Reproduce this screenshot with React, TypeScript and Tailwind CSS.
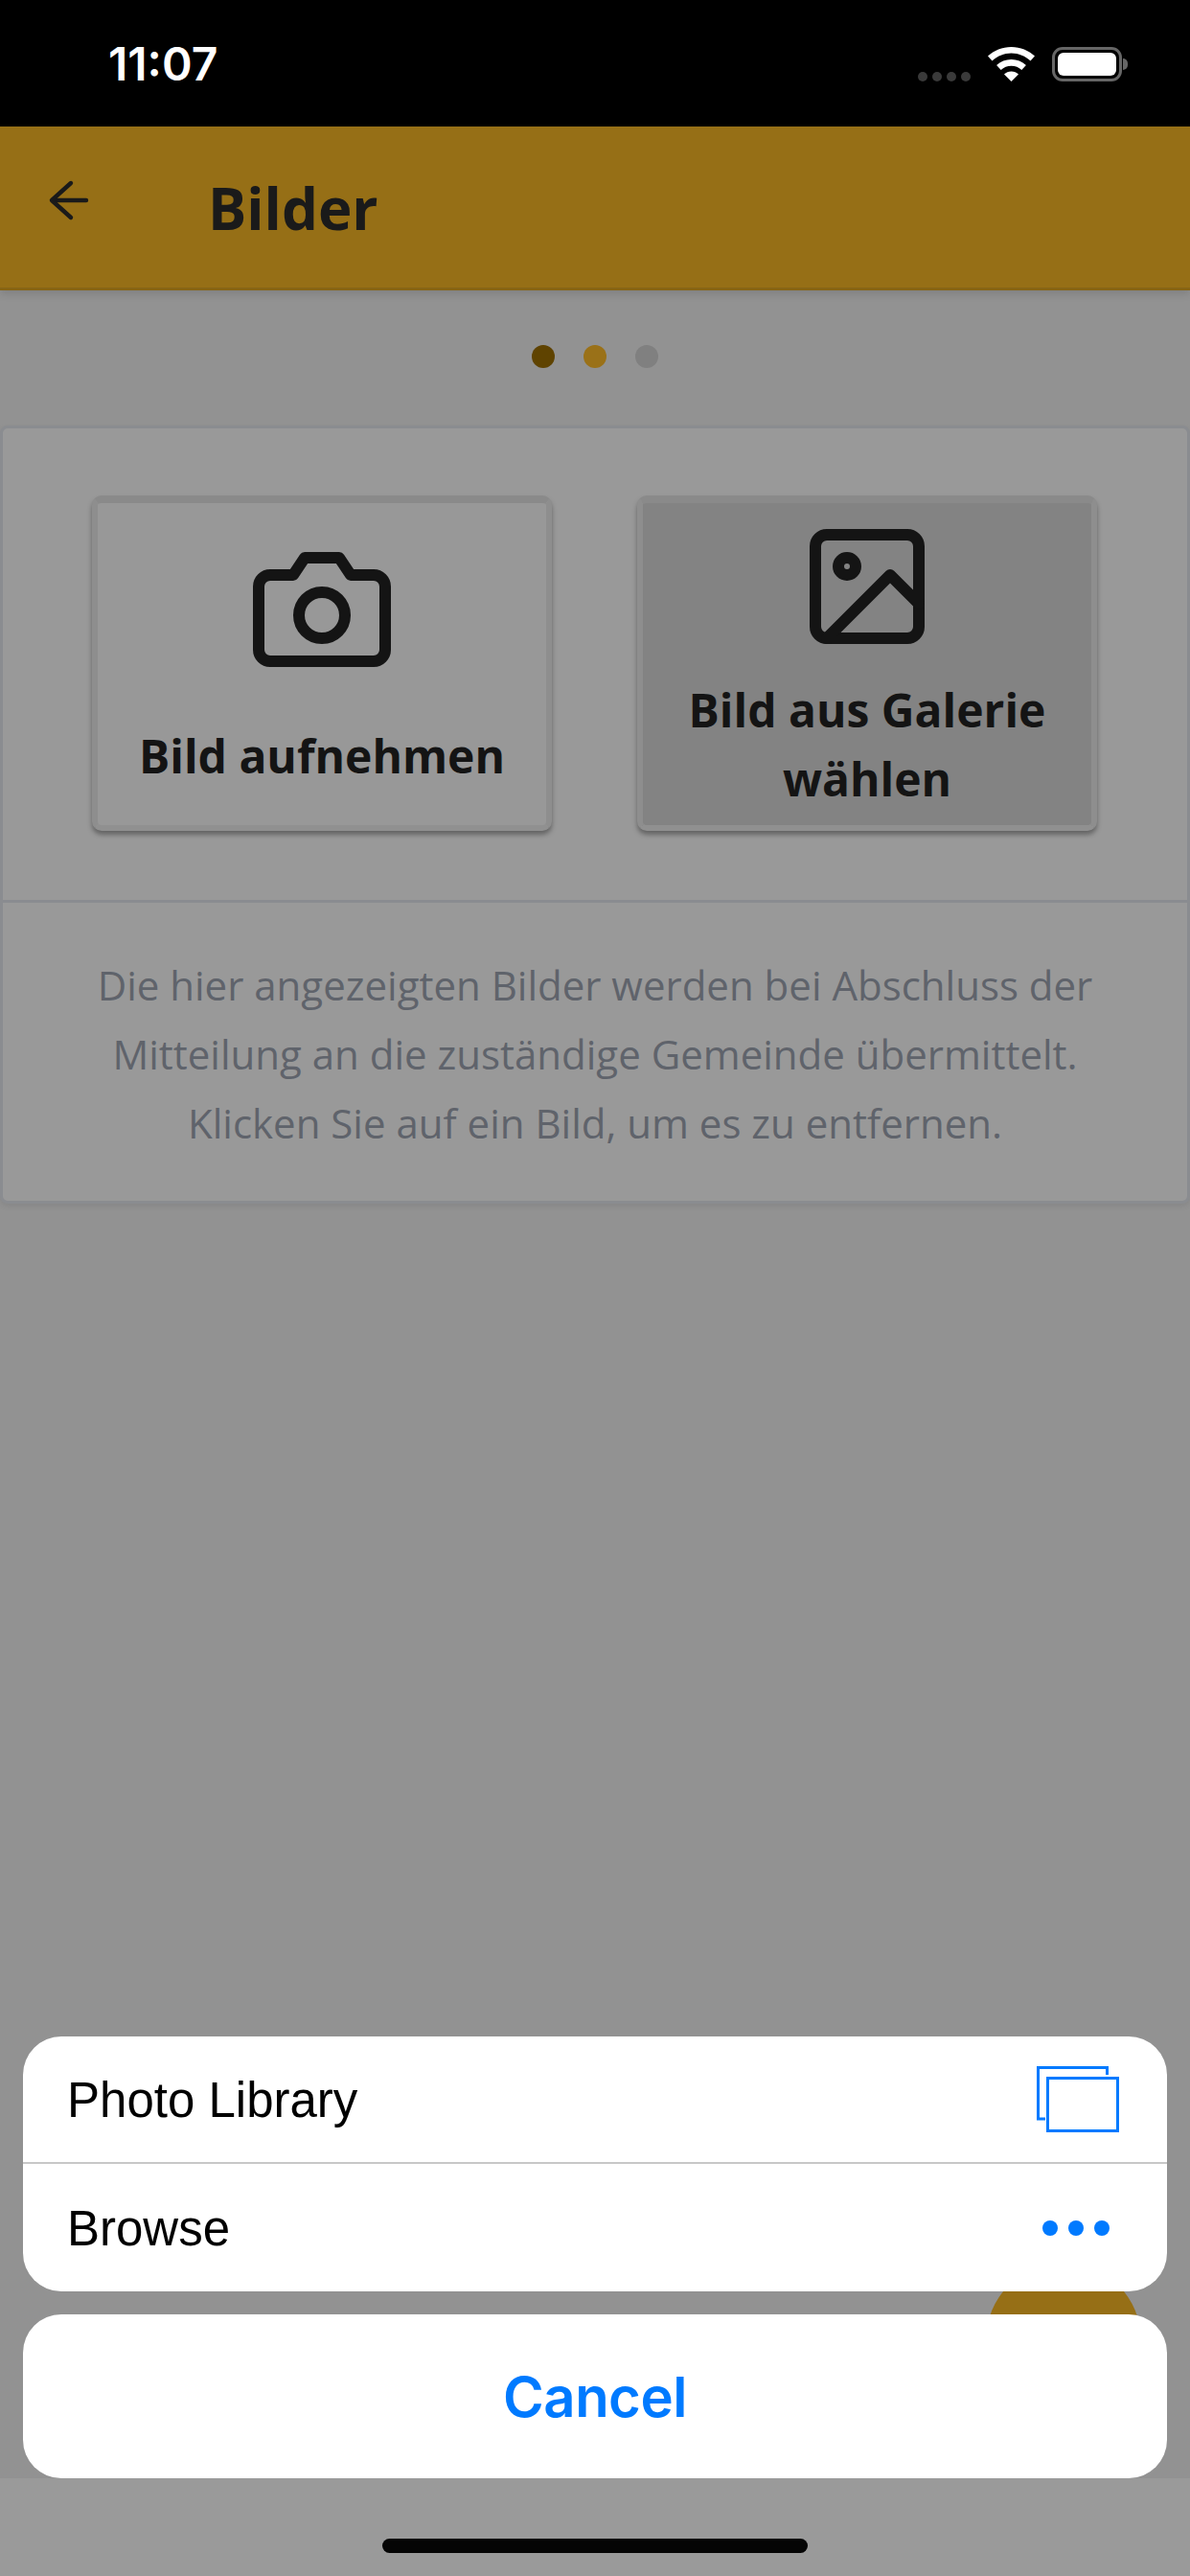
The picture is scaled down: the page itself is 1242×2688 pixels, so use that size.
import React from "react";

const sans = "font-['Open_Sans',sans-serif]";
const ios = "font-['Inter','Liberation_Sans',sans-serif]";
const sheetFont = "font-['Liberation_Sans',sans-serif]";

const StatusBar = () => (
  <div className="h-[132px] bg-black flex items-start justify-between pl-[113px] pr-[65px]">
    <span className={`${ios} text-white font-semibold text-[48px] leading-[48px] mt-[43px]`}>11:07</span>
    <div className="flex items-end gap-[18px] mt-[49px] h-[36px]">
      <div className="flex gap-[5px]">
        {[0, 1, 2, 3].map((i) => (
          <div key={i} className="w-[10px] h-[10px] rounded-full bg-[#3a3a3a]" />
        ))}
      </div>
      <svg width="49" height="36" viewBox="0 0 49 36" fill="#ffffff">
        <path d="M24.5 0C15 0 6.5 3.7 0 9.6l4.5 4.9C9.8 9.7 16.8 6.6 24.5 6.6s14.7 3.1 20 7.9L49 9.6C42.5 3.7 34 0 24.5 0z" />
        <path d="M24.5 13c-5.9 0-11.3 2.3-15.4 6l4.6 4.9c2.9-2.6 6.7-4.2 10.8-4.2s7.9 1.6 10.8 4.2l4.6-4.9c-4.1-3.7-9.5-6-15.4-6z" />
        <path d="M24.5 25.5c-2.9 0-5.5 1.1-7.5 2.9L24.5 36l7.5-7.6c-2-1.8-4.6-2.9-7.5-2.9z" />
      </svg>
      <div className="flex items-center">
        <div className="w-[73px] h-[36px] rounded-[11px] border-[3px] border-[#666666] p-[3px]">
          <div className="w-full h-full rounded-[6px] bg-white" />
        </div>
        <div className="w-[5px] h-[12px] ml-[1px] rounded-r-full bg-[#666666]" />
      </div>
    </div>
  </div>
);

const CameraIcon = () => (
  <svg width="144" height="144" viewBox="0 0 24 24" fill="none" stroke="#141414" strokeWidth="2" strokeLinecap="round" strokeLinejoin="round">
    <path d="M23 19a2 2 0 0 1-2 2H3a2 2 0 0 1-2-2V8a2 2 0 0 1 2-2h4l2-3h6l2 3h4a2 2 0 0 1 2 2z" />
    <circle cx="12" cy="13" r="4" />
  </svg>
);

const ImageIcon = () => (
  <svg width="144" height="144" viewBox="0 0 24 24" fill="none" stroke="#141414" strokeWidth="2" strokeLinecap="round" strokeLinejoin="round">
    <rect x="3" y="3" width="18" height="18" rx="2" ry="2" />
    <circle cx="8.5" cy="8.5" r="1.5" />
    <polyline points="21 15 16 10 5 21" />
  </svg>
);

const SheetRow = ({ label, icon, border }: { label: string; icon: React.ReactNode; border?: boolean }) => (
  <div className={`h-[133px] flex items-center justify-between pl-[46px] pr-[50px] ${border ? "border-b-[2px] border-[#c8c8c8]" : ""}`}>
    <span className={`${sheetFont} text-black text-[51px] mt-[3px]`}>{label}</span>
    {icon}
  </div>
);

export default function App() {
  return (
    <div className={`relative w-[1242px] h-[2688px] overflow-hidden bg-[#929292] ${sans}`}>
      <StatusBar />

      <div className="h-[171px] bg-[#966f16] border-b-[3px] border-[#876414] shadow-[0_4px_8px_rgba(0,0,0,0.12)] flex items-start">
        <svg className="mt-[53px] ml-[48px]" width="48" height="48" viewBox="0 0 24 24" fill="none" stroke="#1a1a1a" strokeWidth="2.2" strokeLinecap="round" strokeLinejoin="round">
          <line x1="21" y1="12" x2="3.5" y2="12" />
          <polyline points="13 3 3 12 13 21" />
        </svg>
        <h1 className="ml-[121px] mt-[44px] text-[60px] leading-[82px] font-bold text-[#1a1a1a]">Bilder</h1>
      </div>

      <div className="flex justify-center gap-[30px] mt-[57px]">
        <div className="w-[24px] h-[24px] rounded-full bg-[#5f4300]" />
        <div className="w-[24px] h-[24px] rounded-full bg-[#9a7118]" />
        <div className="w-[24px] h-[24px] rounded-full bg-[#808080]" />
      </div>

      <div className="mt-[60px] rounded-[8px] border-[3px] border-[#8a8c90] bg-[#999999] shadow-[0_3px_6px_rgba(0,0,0,0.08)]">
        <div className="h-[495px] border-b-[3px] border-[#8a8c90] flex gap-[89px] pl-[93px] pt-[70px]">
          <div className="w-[480px] h-[350px] rounded-[10px] border-x-[6px] border-t-[8px] border-b-[6px] border-x-[#8e8e8e] border-t-[#8a8a8a] border-b-[#909090] bg-[#989898] shadow-[0_4px_5px_rgba(0,0,0,0.35)] flex flex-col items-center">
            <div className="mt-[39px]"><CameraIcon /></div>
            <span className="mt-[45px] text-[48px] leading-[72px] font-bold text-[#141414] text-center">Bild aufnehmen</span>
          </div>
          <div className="w-[480px] h-[350px] rounded-[10px] border-x-[6px] border-t-[8px] border-b-[6px] border-x-[#8e8e8e] border-t-[#8a8a8a] border-b-[#909090] bg-[#838383] shadow-[0_4px_5px_rgba(0,0,0,0.35)] flex flex-col items-center">
            <div className="mt-[15px]"><ImageIcon /></div>
            <span className="mt-[21px] text-[48px] leading-[72px] font-bold text-[#141414] text-center">Bild aus Galerie<br />wählen</span>
          </div>
        </div>
        <div className="h-[311px] flex flex-col items-center pt-[50px] text-[42px] leading-[72px] text-[#5f636b]">
          <p>Die hier angezeigten Bilder werden bei Abschluss der</p>
          <p>Mitteilung an die zuständige Gemeinde übermittelt.</p>
          <p>Klicken Sie auf ein Bild, um es zu entfernen.</p>
        </div>
      </div>

      <div className="absolute left-[1029px] top-[2361px] w-[162px] h-[162px] rounded-full bg-[#966f16]" />
      <div className="absolute left-0 right-0 top-[2586px] bottom-0 bg-[#9a9a9a] flex justify-center">
        <div className="mt-[63px] w-[444px] h-[15px] rounded-full bg-[#050505]" />
      </div>

      <div className="absolute left-[24px] right-[24px] top-[2125px] flex flex-col gap-[24px]">
        <div className="rounded-[40px] bg-white overflow-hidden">
          <SheetRow
            label="Photo Library"
            border
            icon={
              <svg width="86" height="70" viewBox="0 0 86 70" fill="none" stroke="#007aff" strokeWidth="3">
                <path d="M73.5 9V1.5H1.5V55H9" />
                <rect x="11.5" y="12.5" width="73" height="55" />
              </svg>
            }
          />
          <SheetRow
            label="Browse"
            icon={
              <div className="flex gap-[11px] mr-[10px]">
                <div className="w-[16px] h-[16px] rounded-full bg-[#007aff]" />
                <div className="w-[16px] h-[16px] rounded-full bg-[#007aff]" />
                <div className="w-[16px] h-[16px] rounded-full bg-[#007aff]" />
              </div>
            }
          />
        </div>
        <div className="h-[171px] rounded-[40px] bg-white flex items-center justify-center">
          <span className={`${ios} text-[#007aff] text-[58px] font-semibold tracking-[-0.5px] mt-[2px]`}>Cancel</span>
        </div>
      </div>
    </div>
  );
}
